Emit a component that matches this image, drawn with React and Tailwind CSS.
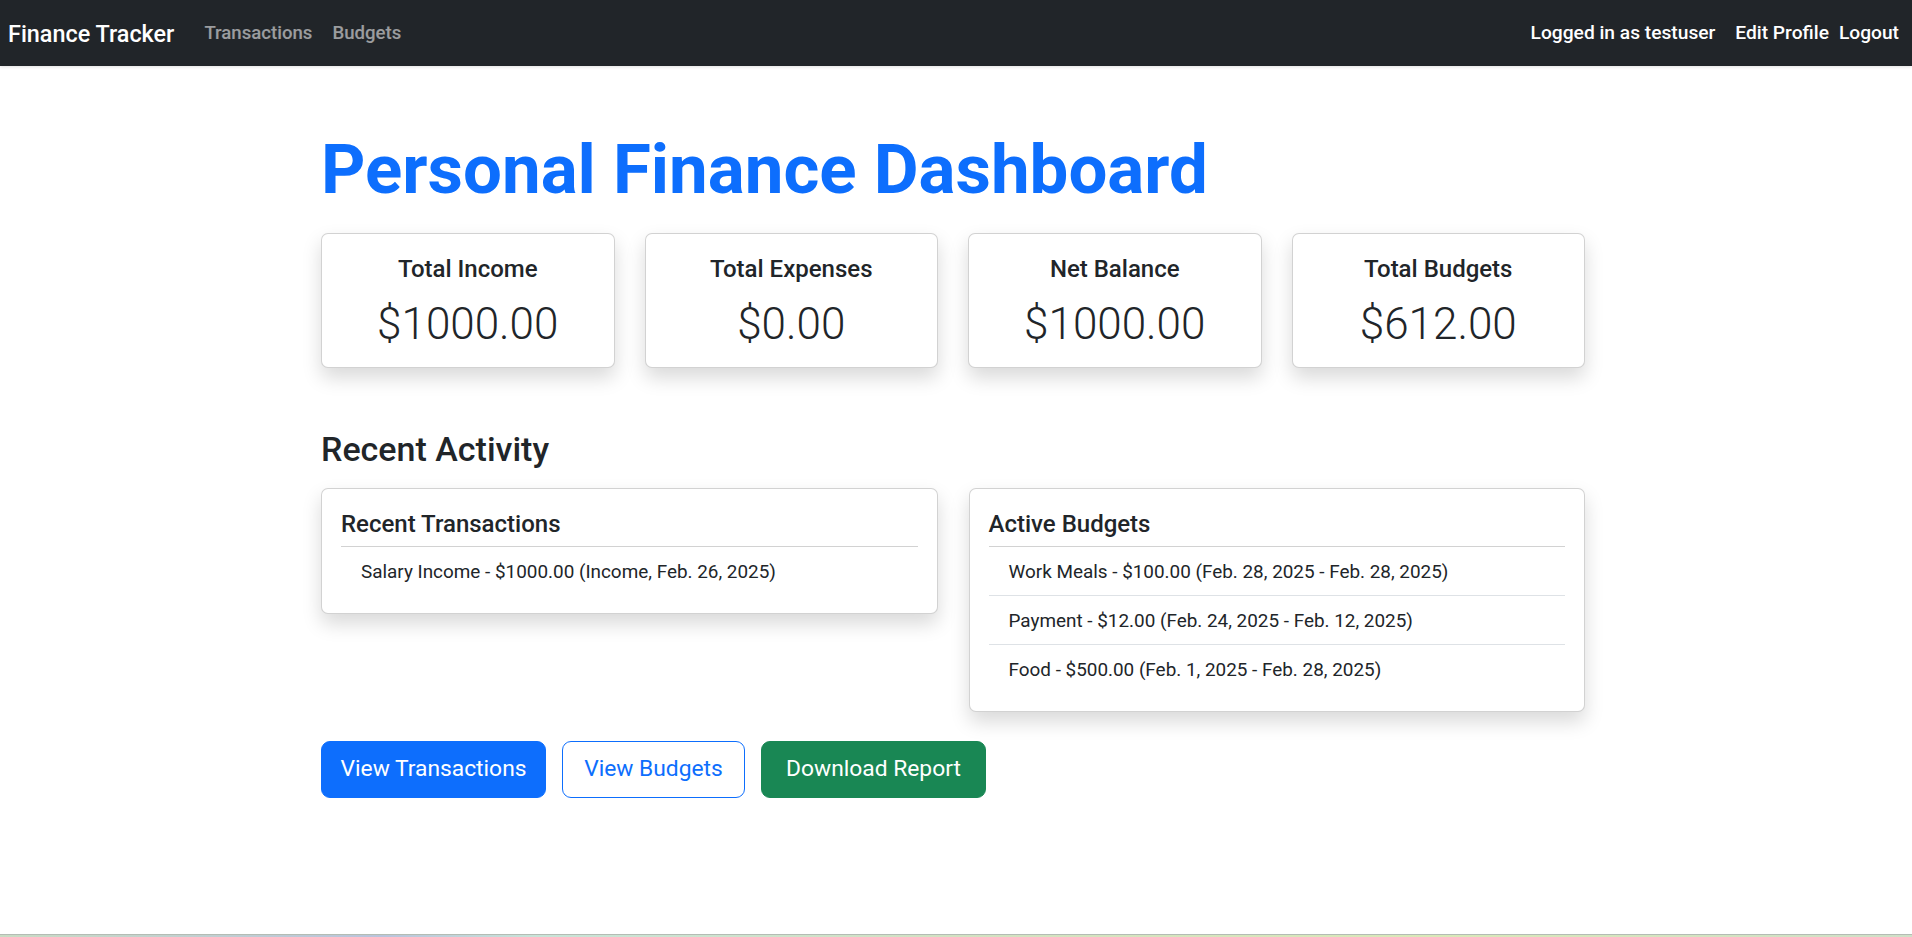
import React from "react";

const stats = [
  { title: "Total Income", value: "$1000.00" },
  { title: "Total Expenses", value: "$0.00" },
  { title: "Net Balance", value: "$1000.00" },
  { title: "Total Budgets", value: "$612.00" },
];

const budgets = [
  "Work Meals - $100.00 (Feb. 28, 2025 - Feb. 28, 2025)",
  "Payment - $12.00 (Feb. 24, 2025 - Feb. 12, 2025)",
  "Food - $500.00 (Feb. 1, 2025 - Feb. 28, 2025)",
];

function ListCard({ title, items }) {
  return (
    <div className="rounded-[7px] border border-black/[0.175] bg-white px-[19px] pt-[20px] pb-[18px] shadow-[0_9.6px_19.2px_rgba(0,0,0,0.15)]">
      <h5 className="mb-[7px] text-[24px] font-medium leading-[30px]">{title}</h5>
      <ul className="border-t border-black/[0.175]">
        {items.map((it, i) => (
          <li
            key={i}
            className={
              "px-[20px] pt-[11px] pb-[9px] text-[18.9px] leading-[28px] " +
              (i < items.length - 1 ? "border-b border-[#dee2e6]" : "")
            }
          >
            {it}
          </li>
        ))}
      </ul>
    </div>
  );
}

export default function App() {
  return (
    <div className="flex min-h-[937px] flex-col bg-white font-['Roboto',sans-serif] text-[#212529]">
      <nav className="flex h-[66px] items-center bg-[#212529] pl-[8px] pr-[13px] pt-[1px] shadow-[0_1px_3px_rgba(0,0,0,0.12)]">
        <a className="mr-[20px] text-[23.4px] font-medium leading-[36px] text-white">Finance Tracker</a>
        <a className="px-[10px] text-[18.6px] font-medium text-white/55">Transactions</a>
        <a className="px-[10px] text-[18.6px] font-medium text-white/55">Budgets</a>
        <div className="ml-auto flex items-center">
          <span className="px-[10px] text-[19.2px] font-medium text-white">Logged in as testuser</span>
          <a className="px-[10px] text-[19.2px] font-medium text-white">Edit Profile</a>
          <button className="text-[19.2px] font-medium text-white">Logout</button>
        </div>
      </nav>

      <main className="flex-1 pr-[6px]">
        <div className="mx-auto w-[1264px] pt-[64px]">
          <h1 className="text-[69px] font-bold leading-[80px] text-[#0d6efd]">
            Personal Finance Dashboard
          </h1>

          <div className="mt-[23px] grid grid-cols-4 gap-[30px]">
            {stats.map((s) => (
              <div
                key={s.title}
                className="rounded-[7px] border border-black/[0.175] bg-white px-[19px] pt-[21px] pb-[14px] text-center shadow-[0_9.6px_19.2px_rgba(0,0,0,0.15)]"
              >
                <h5 className="mb-[12px] text-[24px] font-medium leading-[28.8px]">{s.title}</h5>
                <p className="text-[44px] font-light leading-[57px]">{s.value}</p>
              </div>
            ))}
          </div>

          <h2 className="mt-[58px] mb-[16px] text-[34px] font-medium leading-[46px]">Recent Activity</h2>

          <div className="grid grid-cols-2 items-start gap-[31px]">
            <ListCard title="Recent Transactions" items={["Salary Income - $1000.00 (Income, Feb. 26, 2025)"]} />
            <ListCard title="Active Budgets" items={budgets} />
          </div>

          <div className="mt-[29px] flex gap-[16px]">
            <button className="w-[225px] rounded-[9px] border border-[#0d6efd] bg-[#0d6efd] py-[9.6px] text-center text-[22.8px] leading-[36px] text-white">
              View Transactions
            </button>
            <button className="w-[183px] rounded-[9px] border border-[#0d6efd] bg-white py-[9.6px] text-center text-[22.8px] leading-[36px] text-[#0d6efd]">
              View Budgets
            </button>
            <button className="w-[225px] rounded-[9px] border border-[#198754] bg-[#198754] py-[9.6px] text-center text-[22.8px] leading-[36px] text-white">
              Download Report
            </button>
          </div>
        </div>
      </main>

      <div className="h-[1px] bg-[#b4bcb4]" />
      <div className="h-[2px] bg-[linear-gradient(90deg,#c9dcc4_0%,#b9c4dc_20%,#c8e4d8_28%,#d2e2c2_50%,#d9e9b8_75%,#cfe0c8_100%)]" />
    </div>
  );
}
